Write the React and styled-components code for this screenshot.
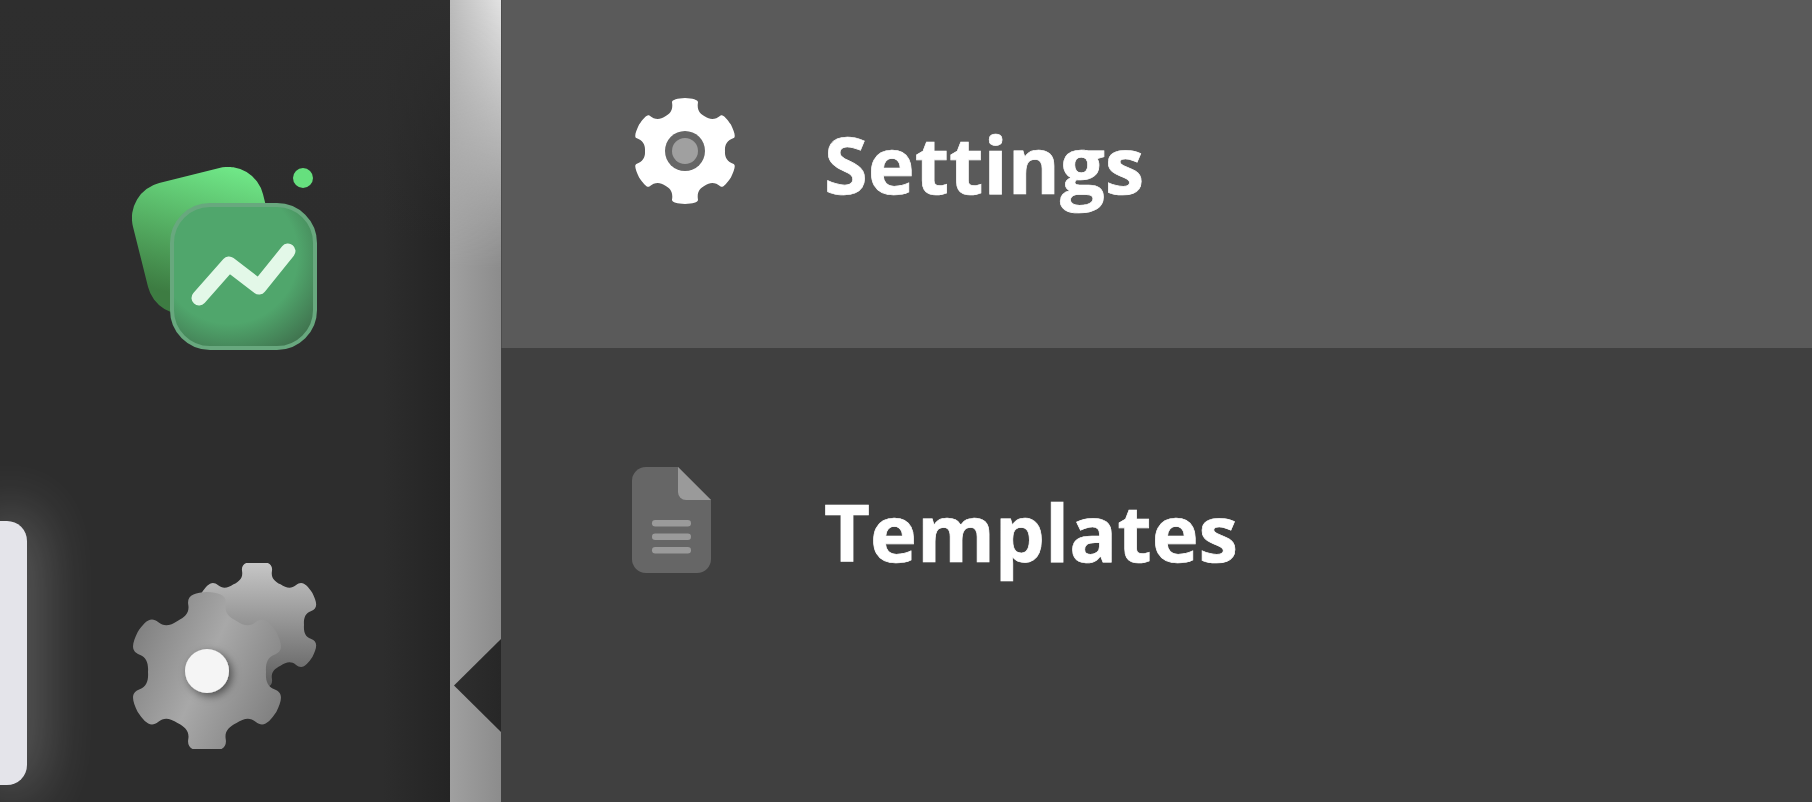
import styled, { createGlobalStyle } from 'styled-components'

const GlobalStyle = createGlobalStyle`
    html, body {
        margin: 0;
        padding: 0;
        height: 100%;
        background: #404040;
        overflow: hidden;
    }
    #root {
        height: 100%;
    }
`;

const Page = styled.div`
    display: flex;
    height: 802px;
    font-family: "Open Sans", "Liberation Sans", sans-serif;
`;
const Sidebar = styled.aside`
    position: relative;
    flex: 0 0 450px;
    display: flex;
    flex-direction: column;
    align-items: center;
    gap: 210px;
    padding-top: 167px;
    box-sizing: border-box;
    background:
        linear-gradient(to bottom, #2e2e2e 0, rgba(46, 46, 46, 0) 240px),
        linear-gradient(to right, #2d2d2d 85%, #242424 100%);
`;
const AppIcon = styled.svg`
    display: block;
    width: 186px;
    height: 186px;
    filter: blur(0.7px);
`;
const ActivePill = styled.div`
    position: absolute;
    left: 0;
    top: 521px;
    width: 27px;
    height: 264px;
    background: #e4e4ea;
    border-radius: 0 20px 20px 0;
    box-shadow: 0 0 60px 10px rgba(255, 255, 255, 0.28);
`;
const Divider = styled.div`
    position: relative;
    flex: 0 0 51px;
    background: linear-gradient(to right, #a0a0a0, #8c8c8c);

    &::before {
        content: "";
        position: absolute;
        inset: 0;
        background: linear-gradient(to right, #bbbbbb, #e2e2e2);
        -webkit-mask-image: linear-gradient(to bottom, #000, transparent 270px);
        mask-image: linear-gradient(to bottom, #000, transparent 270px);
    }
`;
const Collapse = styled.div`
    position: absolute;
    right: 0;
    top: 639px;
    width: 47px;
    height: 93px;
    background: linear-gradient(to right, #2e2e2e, #272727);
    clip-path: polygon(100% 0, 100% 100%, 0 50%);
`;
const Main = styled.main`
    flex: 1;
    display: flex;
    flex-direction: column;
    background: #404040;
`;
const Row = styled.div`
    display: flex;
    align-items: flex-start;
    height: 348px;
    box-sizing: border-box;
    padding-left: ${p => p.$iconLeft}px;
    padding-top: ${p => p.$top}px;
    background: ${p => p.$active ? '#5a5a5a' : 'transparent'};
    border-left: ${p => p.$active ? '1px solid #4c4c4c' : 'none'};
`;
const RowIcon = styled.svg`
    display: block;
    flex: none;
`;
const Label = styled.span`
    margin-left: ${p => p.$gap}px;
    margin-top: ${p => p.$shift}px;
    font-size: 79.4px;
    line-height: 100px;
    font-weight: 700;
    color: #fff;
    -webkit-text-stroke: 0.7px #fff;
`;

// tooth: tip radius, valley radius, half width as part of a step, shoulder height as part of the tooth
const gearPath = (cx, cy, tip, valley, halfWidth, rise, teeth = 6) => {
    const step = (Math.PI * 2) / teeth
    const shoulder = valley + (tip - valley) * rise
    const w = step * halfWidth
    let d = ''
    for (let i = 0; i < teeth; i++) {
        const a = -Math.PI / 2 + i * step
        const at = (r, off) => `${(cx + r * Math.cos(a + off)).toFixed(1)} ${(cy + r * Math.sin(a + off)).toFixed(1)}`
        if (i === 0) d += `M${at(valley, -step / 2)} `
        d += `C${at(valley, -step * 0.36)} ${at(valley + (shoulder - valley) * 0.3, -w * 1.05)} ${at(shoulder, -w)} `
        d += `C${at(tip, -w * 0.95)} ${at(tip, -w * 0.55)} ${at(tip, 0)} `
        d += `C${at(tip, w * 0.55)} ${at(tip, w * 0.95)} ${at(shoulder, w)} `
        d += `C${at(valley + (shoulder - valley) * 0.3, w * 1.05)} ${at(valley, step * 0.36)} ${at(valley, step / 2)} `
    }
    return d + 'Z'
}

const ChartIcon = () => (
    <AppIcon viewBox="0 0 186 186">
        <defs>
            <linearGradient id="backCard" x1="0.8" y1="0" x2="0.3" y2="0.9">
                <stop offset="0" stopColor="#70e888" />
                <stop offset="1" stopColor="#3d7c42" />
            </linearGradient>
            <radialGradient id="frontCard" cx="0.4" cy="0.35" r="0.8">
                <stop offset="0.6" stopColor="#50a66c" />
                <stop offset="1" stopColor="#3e6d4b" />
            </radialGradient>
        </defs>
        <rect x="6.5" y="6.5" width="134" height="134" rx="36" fill="url(#backCard)" transform="rotate(-14 73.5 73.5)" />
        <circle cx="171" cy="11" r="10" fill="#66e07e" />
        <rect x="40" y="38" width="143" height="143" rx="38" fill="url(#frontCard)" stroke="#68a87e" strokeWidth="4" />
        <path d="M67 131 L97 97 L127 120 L156 84" fill="none" stroke="#e3f8e8" strokeWidth="15" strokeLinecap="round" strokeLinejoin="round" />
    </AppIcon>
)

const GearsIcon = () => (
    <AppIcon viewBox="0 0 186 186">
        <defs>
            <linearGradient id="backGear" x1="0.5" y1="0" x2="0.5" y2="1">
                <stop offset="0" stopColor="#c8c8c8" />
                <stop offset="1" stopColor="#5c5c5c" />
            </linearGradient>
            <linearGradient id="frontGear" x1="0" y1="0.2" x2="1" y2="0.7">
                <stop offset="0" stopColor="#7e7e7e" />
                <stop offset="0.5" stopColor="#a8a8a8" />
                <stop offset="1" stopColor="#808080" />
            </linearGradient>
            <filter id="dotShadow" x="-40%" y="-40%" width="180%" height="180%">
                <feDropShadow dx="3" dy="3" stdDeviation="4" floodColor="#000" floodOpacity="0.5" />
            </filter>
        </defs>
        <path d={gearPath(125, 62, 64, 47, 0.26, 0.5)} fill="url(#backGear)" />
        <path d={gearPath(75, 109, 80, 59, 0.26, 0.5)} fill="url(#frontGear)" />
        <circle cx="75" cy="108" r="22" fill="#f5f5f5" filter="url(#dotShadow)" />
    </AppIcon>
)

const SettingsIcon = () => (
    <RowIcon width="100" height="106" viewBox="0 0 100 106">
        <path d={gearPath(50, 53, 53, 40, 0.25, 0.8)} fill="#fff" />
        <circle cx="50" cy="53" r="20" fill="#666" />
        <circle cx="50" cy="53" r="13" fill="#a0a0a0" />
    </RowIcon>
)

const DocIcon = () => (
    <RowIcon width="79" height="106" viewBox="0 0 79 106">
        <path d="M14 0 H46 L79 33 V92 A14 14 0 0 1 65 106 H14 A14 14 0 0 1 0 92 V14 A14 14 0 0 1 14 0 Z" fill="#666" />
        <path d="M46 0 L79 33 H54 A8 8 0 0 1 46 25 Z" fill="#9a9a9a" />
        <rect x="20" y="53" width="39" height="6.5" rx="3.2" fill="#9a9a9a" />
        <rect x="20" y="66.5" width="39" height="6.5" rx="3.2" fill="#9a9a9a" />
        <rect x="20" y="80" width="39" height="6.5" rx="3.2" fill="#9a9a9a" />
    </RowIcon>
)

const App = () => {
    return (
        <>
            <GlobalStyle />
            <Page>
                <Sidebar>
                    <ActivePill />
                    <ChartIcon />
                    <GearsIcon />
                </Sidebar>
                <Divider>
                    <Collapse />
                </Divider>
                <Main>
                    <Row $active $iconLeft={133} $top={98}>
                        <SettingsIcon />
                        <Label $gap={89} $shift={15}>Settings</Label>
                    </Row>
                    <Row $iconLeft={131} $top={119}>
                        <DocIcon />
                        <Label $gap={113} $shift={14}>Templates</Label>
                    </Row>
                </Main>
            </Page>
        </>
    );
}

export default App;
